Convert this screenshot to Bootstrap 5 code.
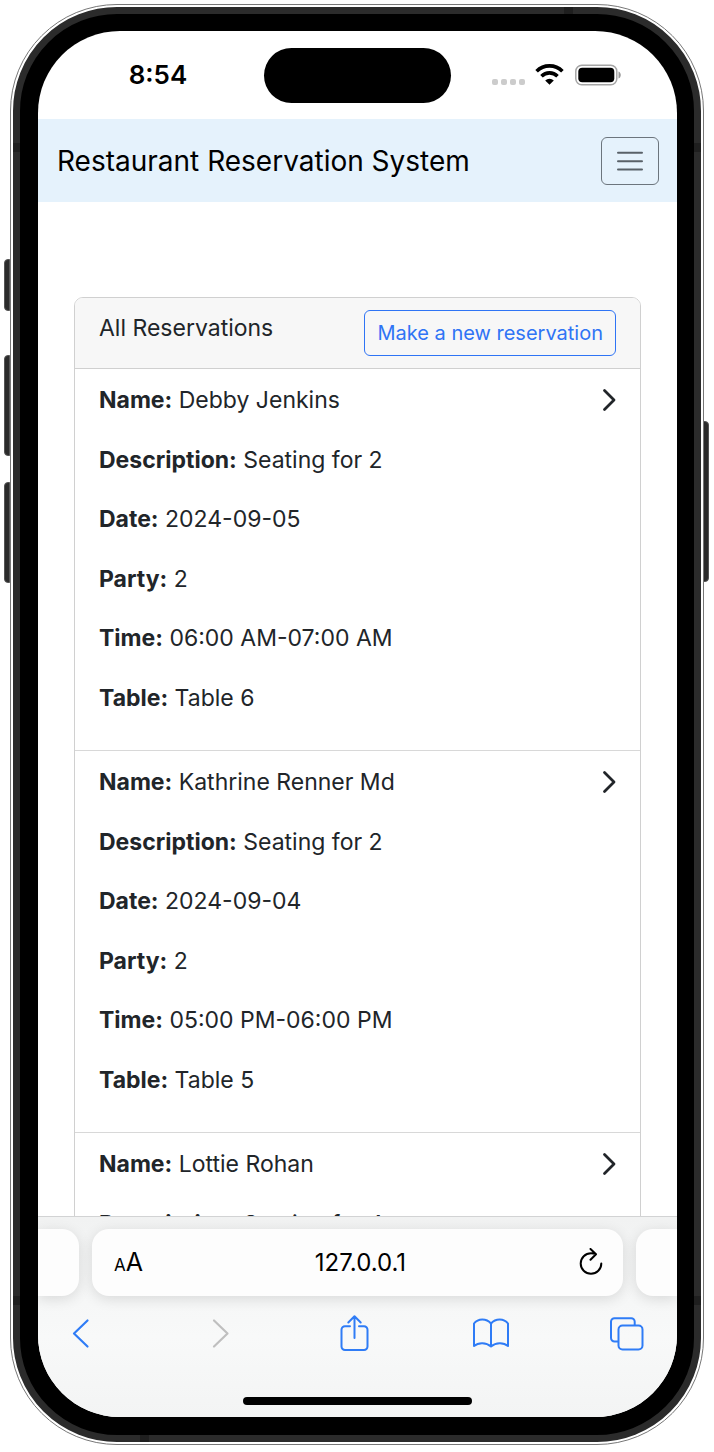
<!DOCTYPE html>
<html lang="en">
<head>
<meta charset="utf-8">
<meta name="viewport" content="width=device-width, initial-scale=1">
<title>Restaurant Reservation System</title>
<link href="https://cdn.jsdelivr.net/npm/bootstrap@5.3.0/dist/css/bootstrap.min.css" rel="stylesheet">
<style>
  body { font-family: Inter, "Liberation Sans", sans-serif; font-size: 23px; line-height: 36px; background: #fff; color: #212529; }
  /* device shell */
  .device { height: 100vh; padding: 4px 10px 7px; }
  .rim { border: 1px solid #777; border-radius: 107px; padding: 2px; }
  .bezel { border: 7px solid #2b2b2b; border-radius: 104px; background: #000; padding: 17px 17px 18px 18px; }
  .screen { border-radius: 82px; background: #fff; }
  .side-key { position: absolute; width: 6px; background: #2b2b2b; border: 1px solid #555; }
  .side-key.start { left: 4px; border-radius: 4px 0 0 4px; }
  .side-key.end { right: 5px; border-radius: 0 4px 4px 0; }
  .key-action { top: 259px; height: 52px; }
  .key-up { top: 355px; height: 101px; }
  .key-down { top: 482px; height: 101px; }
  .key-power { top: 421px; height: 161px; }
  /* darker antenna bands across the metal frame */
  .band { position: absolute; background: #1f1f1f; }
  .band.upright { width: 7px; height: 9px; }
  .band.level { width: 9px; height: 7px; }
  .band.tl { left: 2px; top: 138px; }
  .band.tr { right: 2px; top: 138px; }
  .band.bl { left: 2px; bottom: 139px; }
  .band.br { right: 2px; bottom: 139px; }
  .band.top-end { right: 130px; top: 2px; }
  .band.base-start { left: 129px; bottom: 2px; }
  /* status bar */
  .status { height: 88px; color: #000; }
  .clock { font-size: 26px; font-weight: 600; padding-left: 14px; }
  .island { width: 187px; height: 55px; background: #000; }
  .signals { padding-right: 16px; }
  /* page */
  .site-bar { background: #e5f2fc; padding: 18px 18px 17px 19px; }
  .site-bar .navbar-brand { font-size: 28px; line-height: 40px; color: #000; }
  .site-bar .navbar-toggler { width: 58px; height: 48px; border: 1px solid #6c757d; border-radius: 6px; }
  .view { padding: 95px 36px 0; }
  .booking { --bs-card-border-color: #d0d0d0; --bs-card-border-radius: 9px; --bs-card-inner-border-radius: 8px; }
  .booking .card-header { background: #f7f7f7; padding: 12px 24px; }
  .btn-new { --bs-btn-color: #2f74f5; --bs-btn-border-color: #2f74f5; font-size: 20px; line-height: 30px; padding: 7px 12px; border-radius: 6px; }
  .booking .list-group-item { padding: 13px 24px 11px; border-color: #d8d8d8; }
  .facts { display: grid; grid-auto-rows: 1fr; min-height: 357px; }
  .facts p { margin: 0; }
  .facts strong { font-weight: 700; }
  /* browser chrome */
  .chrome { border-top: 1px solid #d2d3d4; background: linear-gradient(#f1f2f2, #f8f9f9 60%, #f3f4f4); padding-top: 12px; color: #000; }
  .address-row { gap: 13px; }
  .address { height: 67px; border-radius: 17px; background: #fdfdfd; box-shadow: 0 3px 14px rgba(0, 0, 0, .12); padding: 0 19px 0 22px; }
  .tab-peek { width: 41px; height: 67px; background: #fdfdfd; box-shadow: 0 3px 14px rgba(0, 0, 0, .12); }
  .tab-peek.start { border-radius: 0 17px 17px 0; }
  .tab-peek.end { border-radius: 17px 0 0 17px; }
  .plain { border: 0; background: none; padding: 0; color: inherit; line-height: 1; }
  .host { font-size: 24px; background: none; outline: 0; color: #000; }
  .small-a { font-size: 17px; }
  .big-a { font-size: 25px; }
  .tools { padding: 17px 30px 0 23px; color: #2f7cf6; }
  .home-bar { width: 229px; height: 8px; background: #000; margin: 44px auto 12px; }
</style>
</head>
<body>
<div class="device position-relative">
  <span class="side-key start key-action"></span>
  <span class="side-key start key-up"></span>
  <span class="side-key start key-down"></span>
  <span class="side-key end key-power"></span>
  <div class="rim h-100 bg-white position-relative">
    <div class="bezel h-100">
      <div class="screen h-100 d-flex flex-column overflow-hidden">

        <div class="status d-flex align-items-center flex-shrink-0">
          <div class="clock flex-fill w-25 text-center">8:54</div>
          <div class="island rounded-pill flex-shrink-0"></div>
          <div class="signals flex-fill w-25 d-flex justify-content-center">
            <svg width="130" height="24" viewBox="0 0 130 24" aria-label="Signal, Wi-Fi, battery">
              <g fill="#ccc"><rect x="1" y="16" width="6" height="6" rx="2"/><rect x="10" y="16" width="6" height="6" rx="2"/><rect x="19" y="16" width="6" height="6" rx="2"/><rect x="28" y="16" width="6" height="6" rx="2"/></g>
              <g fill="none" stroke="#000" stroke-width="3.6"><path d="M45.600 8.300a18 18 0 0 1 25.800 0"/><path d="M50.500 13.200a11.300 11.300 0 0 1 16 0"/></g>
              <path d="M58.500 21.700l-4.300-4.300a6.200 6.200 0 0 1 8.600 0z"/>
              <rect x="84.800" y="2.300" width="41" height="19.400" rx="6" fill="none" stroke="#a5a5a5" stroke-width="1.500"/>
              <rect x="87.300" y="4.800" width="36" height="14.400" rx="4"/>
              <path d="M127.500 8.500c3 1 3 6 0 7z" fill="#999"/>
            </svg>
          </div>
        </div>

        <nav class="navbar site-bar flex-shrink-0">
          <a class="navbar-brand m-0 p-0" href="#">Restaurant Reservation System</a>
          <button class="navbar-toggler p-0 d-flex align-items-center justify-content-center" type="button" aria-label="Toggle navigation">
            <svg width="26" height="20" viewBox="0 0 26 20" stroke="#596168" stroke-width="2" stroke-linecap="round"><path d="M1 1.800h24M1 10.200h24M1 18.500h24"/></svg>
          </button>
        </nav>

        <main class="view flex-fill overflow-hidden">
          <div class="card booking">
            <div class="card-header d-flex justify-content-between align-items-start">
              <span>All Reservations</span>
              <a class="btn btn-outline-primary btn-new" href="#">Make a new reservation</a>
            </div>
            <ul class="list-group list-group-flush">
              <li class="list-group-item d-flex justify-content-between">
                <div class="facts">
                  <p><strong>Name:</strong> Debby Jenkins</p>
                  <p><strong>Description:</strong> Seating for 2</p>
                  <p><strong>Date:</strong> 2024-09-05</p>
                  <p><strong>Party:</strong> 2</p>
                  <p><strong>Time:</strong> 06:00 AM-07:00 AM</p>
                  <p><strong>Table:</strong> Table 6</p>
                </div>
                <a href="#" class="text-reset align-self-start d-flex py-1" aria-label="Open reservation"><svg width="14" height="28" viewBox="0 0 14 28" fill="none" stroke="currentColor" stroke-width="2.800" stroke-linecap="round" stroke-linejoin="round"><path d="M2.500 4.500l9.500 9.500-9.500 9.500"/></svg></a>
              </li>
              <li class="list-group-item d-flex justify-content-between">
                <div class="facts">
                  <p><strong>Name:</strong> Kathrine Renner Md</p>
                  <p><strong>Description:</strong> Seating for 2</p>
                  <p><strong>Date:</strong> 2024-09-04</p>
                  <p><strong>Party:</strong> 2</p>
                  <p><strong>Time:</strong> 05:00 PM-06:00 PM</p>
                  <p><strong>Table:</strong> Table 5</p>
                </div>
                <a href="#" class="text-reset align-self-start d-flex py-1" aria-label="Open reservation"><svg width="14" height="28" viewBox="0 0 14 28" fill="none" stroke="currentColor" stroke-width="2.800" stroke-linecap="round" stroke-linejoin="round"><path d="M2.500 4.500l9.500 9.500-9.500 9.500"/></svg></a>
              </li>
              <li class="list-group-item d-flex justify-content-between">
                <div>
                  <p class="mb-4"><strong>Name:</strong> Lottie Rohan</p>
                  <p><strong>Description:</strong> Seating for 4</p>
                </div>
                <a href="#" class="text-reset align-self-start d-flex py-1" aria-label="Open reservation"><svg width="14" height="28" viewBox="0 0 14 28" fill="none" stroke="currentColor" stroke-width="2.800" stroke-linecap="round" stroke-linejoin="round"><path d="M2.500 4.500l9.500 9.500-9.500 9.500"/></svg></a>
              </li>
            </ul>
          </div>
        </main>

        <div class="chrome flex-shrink-0">
          <div class="address-row d-flex">
            <span class="tab-peek start"></span>
            <div class="address flex-fill d-flex align-items-center justify-content-between">
              <button class="plain" type="button" aria-label="Text size"><span class="small-a">A</span><span class="big-a">A</span></button>
              <input class="host border-0 text-center w-50" type="text" value="127.0.0.1" aria-label="Address">
              <button class="plain" type="button" aria-label="Reload"><svg width="26" height="30" viewBox="0 0 26 30" fill="none" stroke="#000" stroke-width="2" stroke-linecap="round" stroke-linejoin="round"><path d="M23.300 15.500a10.300 10.300 0 1 1-10.300-10.300c1.600 0 3.200.3 4.800 1M12.500 1l5.500 5.200-5.500 5.500"/></svg></button>
            </div>
            <span class="tab-peek end"></span>
          </div>
          <div class="tools d-flex justify-content-between">
            <button class="plain" type="button" aria-label="Back"><svg width="40" height="40" viewBox="0 0 40 40" fill="none" stroke="currentColor" stroke-width="2.200" stroke-linecap="round" stroke-linejoin="round"><path d="M26.500 7.500L13 20.500l13.500 13"/></svg></button>
            <button class="plain" type="button" aria-label="Forward"><svg width="40" height="40" viewBox="0 0 40 40" fill="none" stroke="#bfbfbf" stroke-width="2.200" stroke-linecap="round" stroke-linejoin="round"><path d="M16 7.500l13.500 13-13.500 13"/></svg></button>
            <button class="plain" type="button" aria-label="Share"><svg width="40" height="40" viewBox="0 0 40 40" fill="none" stroke="currentColor" stroke-width="2" stroke-linecap="round" stroke-linejoin="round"><path d="M16 13.300h-5a3.500 3.500 0 0 0-3.500 3.500v16.700a3.500 3.500 0 0 0 3.500 3.500h19a3.500 3.500 0 0 0 3.500-3.500v-16.700a3.500 3.500 0 0 0-3.500-3.500h-5M20.500 25v-21.500M14.300 9.500l6.200-6.200 6.200 6.200"/></svg></button>
            <button class="plain" type="button" aria-label="Bookmarks"><svg width="40" height="40" viewBox="0 0 40 40" fill="none" stroke="currentColor" stroke-width="2" stroke-linejoin="round"><path d="M20 10.500C15.500 5 7 5 3 10.500v22.500c4.500-3.800 12-3.800 17 .5 5-4.300 12.500-4.300 17-.5V10.500C33 5 24.500 5 20 10.500zV33"/></svg></button>
            <button class="plain" type="button" aria-label="Tabs"><svg width="40" height="40" viewBox="0 0 40 40" fill="none" stroke="currentColor" stroke-width="2" stroke-linejoin="round"><rect x="11.500" y="12.500" width="24" height="24" rx="4"/><path d="M11.500 28.500h-4a3.500 3.500 0 0 1-3.500-3.500V8.800a3.500 3.500 0 0 1 3.500-3.500h16.700a3.500 3.500 0 0 1 3.500 3.500v3.700"/></svg></button>
          </div>
          <div class="home-bar rounded-pill"></div>
        </div>

      </div>
    </div>
    <span class="band upright tl"></span>
    <span class="band upright tr"></span>
    <span class="band upright bl"></span>
    <span class="band upright br"></span>
    <span class="band level top-end"></span>
    <span class="band level base-start"></span>
  </div>
</div>
<script src="https://cdn.jsdelivr.net/npm/bootstrap@5.3.0/dist/js/bootstrap.bundle.min.js"></script>
</body>
</html>
